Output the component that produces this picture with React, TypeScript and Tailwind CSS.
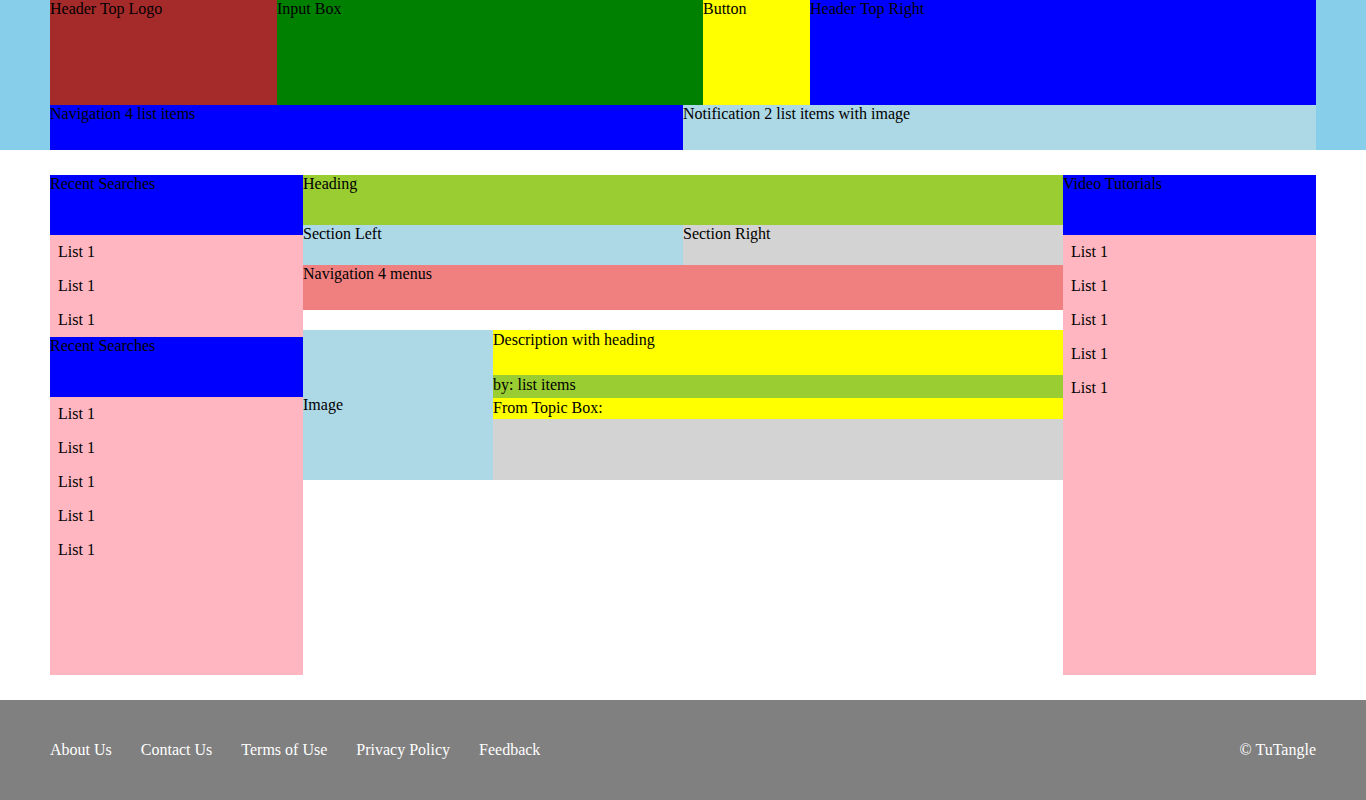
import React from 'react';

const serif = "font-['Liberation_Serif','Times_New_Roman',serif]";

function ListBlock({ count }: { count: number }) {
  return (
    <ul>
      {Array.from({ length: count }).map((_, i) => (
        <li key={i} className="px-2 py-2 leading-[18px]">
          List 1
        </li>
      ))}
    </ul>
  );
}

export default function App() {
  const links = ['About Us', 'Contact Us', 'Terms of Use', 'Privacy Policy', 'Feedback'];

  return (
    <div className={`${serif} text-base text-black bg-white min-h-[800px] leading-[18px]`}>
      <header className="bg-[#87ceeb] h-[150px] px-[50px]">
        <div className="flex h-[105px]">
          <div className="w-[227px] bg-[#a52a2a]">Header Top Logo</div>
          <div className="w-[426px] bg-[#008000]">Input Box</div>
          <div className="w-[107px] bg-[#ffff00]">Button</div>
          <div className="flex-1 bg-[#0000ff]">Header Top Right</div>
        </div>
        <div className="flex h-[45px]">
          <div className="w-[633px] bg-[#0000ff]">Navigation 4 list items</div>
          <div className="flex-1 bg-[#add8e6]">Notification 2 list items with image</div>
        </div>
      </header>

      <main className="flex px-[50px] py-[25px]">
        <aside className="w-[253px] h-[500px] bg-[#ffb6c1]">
          <div className="h-[60px] bg-[#0000ff]">Recent Searches</div>
          <ListBlock count={3} />
          <div className="h-[60px] bg-[#0000ff]">Recent Searches</div>
          <ListBlock count={5} />
        </aside>

        <section className="w-[760px]">
          <div className="h-[50px] bg-[#9acd32]">Heading</div>
          <div className="flex h-[40px]">
            <div className="w-[380px] bg-[#add8e6]">Section Left</div>
            <div className="flex-1 bg-[#d3d3d3]">Section Right</div>
          </div>
          <div className="h-[45px] bg-[#f08080]">Navigation 4 menus</div>
          <div className="flex mt-[20px] h-[150px]">
            <div className="w-[190px] bg-[#add8e6] flex items-center">Image</div>
            <div className="flex-1 flex flex-col">
              <div className="h-[45px] bg-[#ffff00] pt-[1px]">Description with heading</div>
              <div className="h-[23px] bg-[#9acd32] pt-[1px]">by: list items</div>
              <div className="h-[21px] bg-[#ffff00] pt-[1px]">From Topic Box:</div>
              <div className="flex-1 bg-[#d3d3d3]"></div>
            </div>
          </div>
        </section>

        <aside className="flex-1 h-[500px] bg-[#ffb6c1]">
          <div className="h-[60px] bg-[#0000ff]">Video Tutorials</div>
          <ListBlock count={5} />
        </aside>
      </main>

      <footer className="bg-[#808080] h-[100px] px-[50px] flex items-center justify-between text-white">
        <nav className="flex gap-[29px]">
          {links.map((l) => (
            <a key={l} href="#" className="text-white">
              {l}
            </a>
          ))}
        </nav>
        <div>© TuTangle</div>
      </footer>
    </div>
  );
}
